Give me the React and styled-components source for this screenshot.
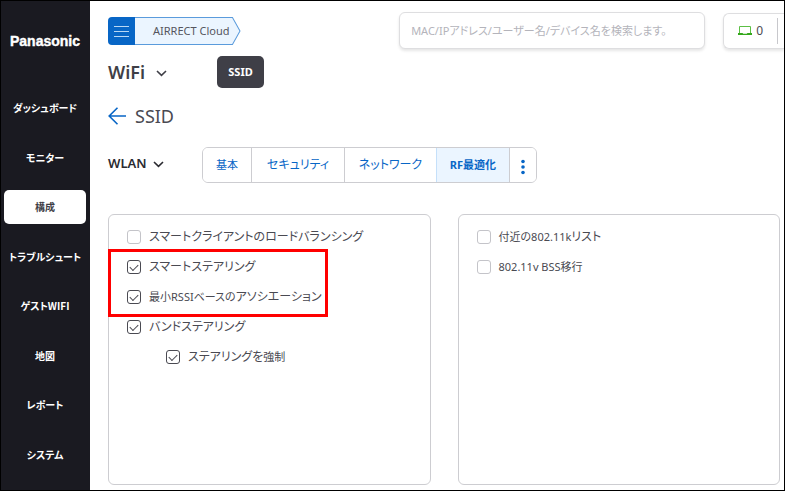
import { useState } from 'react';
import { createGlobalStyle, styled } from 'styled-components';

const GlobalStyle = createGlobalStyle`
  * {
    box-sizing: border-box;
  }

  body {
    margin: 0;
    background: #fff;
    color: #4a4a52;
    font-family: 'Noto Sans', 'Noto Sans CJK JP', sans-serif;
    font-size: 12px;
    line-height: 20px;
    font-feature-settings: 'palt';
  }

  button,
  input {
    font: inherit;
    font-feature-settings: inherit;
  }

  button {
    padding: 0;
    border: 0;
    background: none;
    color: inherit;
    cursor: pointer;
  }
`;

const Page = styled.div`
  display: flex;
  min-height: 100vh;
  border: 1px solid #000;
`;

const Sidebar = styled.aside`
  display: flex;
  flex: none;
  flex-direction: column;
  width: 89px;
  padding: 30px 4px 18px 3px;
  background: #1a1a21;
`;

const Brand = styled.a`
  margin-bottom: 40px;
  color: #fff;
  font-family: 'Liberation Sans', Arial, sans-serif;
  font-size: 14px;
  font-weight: 700;
  line-height: 20px;
  text-align: center;
  text-decoration: none;
  -webkit-text-stroke: 0.4px #fff;
`;

const Nav = styled.nav`
  display: flex;
  flex: 1;
  flex-direction: column;
  justify-content: space-between;
`;

const NavLink = styled.a`
  border-radius: 5px;
  background: ${({ $active }) => ($active ? '#fff' : 'transparent')};
  color: ${({ $active }) => ($active ? '#3f3f47' : '#fff')};
  font-family: 'Noto Sans CJK JP', sans-serif;
  font-size: 10px;
  font-weight: 700;
  line-height: 34px;
  text-align: center;
  text-decoration: none;
  white-space: nowrap;
`;

const Main = styled.main`
  display: flex;
  flex: 1;
  flex-direction: column;
  min-width: 0;
  padding: 11px 4px 5px 18px;
`;

const Header = styled.header`
  display: flex;
  align-items: center;
  margin-right: -4px;
`;

const Breadcrumb = styled.div`
  display: flex;
  flex: none;
  height: 28px;
`;

const MenuButton = styled.button`
  display: grid;
  place-items: center;
  width: 27px;
  border-radius: 4px 0 0 4px;
  background: #0866c6;
`;

const Crumb = styled.a`
  position: relative;
  padding: 0 11px 0 18px;
  color: #55555e;
  font-size: 11px;
  line-height: 28px;
  text-decoration: none;

  svg {
    position: absolute;
    inset: 0;
    width: 100%;
    height: 100%;
  }

  span {
    position: relative;
  }
`;

const Search = styled.input`
  flex: 0 1 306px;
  min-width: 0;
  height: 37px;
  margin-left: auto;
  padding: 0 11px;
  border: 1px solid #dedee0;
  border-radius: 6px;
  font-size: 11px;
  appearance: none;
  box-shadow: 0 2px 3px rgba(0, 0, 0, 0.1);

  &::placeholder {
    color: #b4b4bb;
  }
`;

const Status = styled.div`
  display: flex;
  flex: none;
  align-items: center;
  gap: 4px;
  height: 36px;
  margin-left: 18px;
  padding: 0 6px 0 14px;
  border: 1px solid #dedee0;
  border-right: 0;
  border-radius: 6px 0 0 6px;
  box-shadow: 0 2px 3px rgba(0, 0, 0, 0.1);

  &::after {
    width: 1px;
    height: 26px;
    margin-left: 10px;
    background: #c8c8cc;
    content: '';
  }
`;

const TitleRow = styled.div`
  display: flex;
  align-items: center;
  margin-top: 7px;
`;

const Picker = styled.button`
  display: flex;
  align-items: center;
  gap: ${({ $large }) => ($large ? '11px' : '6px')};
  width: ${({ $large }) => ($large ? '109px' : '94px')};
  color: ${({ $large }) => ($large ? '#3f3f47' : '#2a2a30')};
  font-size: ${({ $large }) => ($large ? '18px' : '13px')};
  font-weight: 600;
  line-height: 24px;

  svg {
    margin-top: 2px;
  }
`;

const DarkButton = styled.button`
  width: 47px;
  height: 32px;
  border-radius: 5px;
  background: #3f3f47;
  color: #fff;
  font-size: 11px;
  font-weight: 700;
`;

const Heading = styled.h1`
  display: flex;
  align-items: center;
  gap: 9px;
  margin: 16px 0 19px;
  font-size: 18px;
  font-weight: 400;
  line-height: 24px;

  button {
    display: flex;
  }
`;

const TabRow = styled.div`
  display: flex;
  align-items: flex-start;
  margin-bottom: 31px;

  > ${Picker} {
    margin-top: 4px;
  }
`;

const Tabs = styled.div`
  display: grid;
  grid-template-columns: 48px 93px 92px 73px 27px;
  overflow: hidden;
  border: 1px solid #cdcdd1;
  border-radius: 6px;
`;

const Tab = styled.button`
  height: 34px;
  background: ${({ $active }) => ($active ? '#ebf5ff' : '#fff')};
  color: #0866c6;
  font-weight: ${({ $active }) => ($active ? 700 : 400)};
  white-space: nowrap;

  &:not(:first-child) {
    border-left: 1px solid ${({ $active }) => ($active ? '#c5e0fa' : '#cdcdd1')};
  }

  svg {
    display: block;
    margin: 4px auto 0;
  }
`;

const Panels = styled.div`
  display: grid;
  flex: 1;
  grid-template-columns: 1fr 1fr;
  gap: 27px;
`;

const Panel = styled.section`
  display: flex;
  flex-direction: column;
  align-items: flex-start;
  gap: 10px;
  padding: 12px 18px;
  border: 1px solid #cdcdd1;
  border-radius: 6px;
`;

const Highlight = styled.div`
  position: relative;
  display: flex;
  flex-direction: column;
  gap: 10px;

  &::after {
    position: absolute;
    inset: -8px -6px -10px -19px;
    border: 3px solid #f00;
    content: '';
    pointer-events: none;
  }
`;

const OptionLabel = styled.label`
  display: flex;
  align-items: center;
  gap: 8px;
  margin-left: ${({ $nested }) => ($nested ? '39px' : '0')};
`;

const Checkbox = styled.input`
  display: grid;
  flex: none;
  place-items: center;
  width: 14px;
  height: 14px;
  margin: 0;
  border: 1px solid #c4c4c9;
  border-radius: 3px;
  appearance: none;

  &:checked {
    border-color: #4a4a52;
  }

  &:checked::after {
    width: 7px;
    height: 4px;
    margin-bottom: 2px;
    border: solid #4a4a52;
    border-width: 0 0 1px 1px;
    content: '';
    transform: rotate(-45deg);
  }
`;

const Small = styled.span`
  font-size: 11px;
`;

const NAV_ITEMS = [
  'ダッシュボード',
  'モニター',
  '構成',
  'トラブルシュート',
  'ゲストWIFI',
  '地図',
  'レポート',
  'システム',
];

const TABS = [
  { id: 'basic', label: <Small>基本</Small> },
  { id: 'security', label: 'セキュリティ' },
  { id: 'network', label: 'ネットワーク' },
  { id: 'rf', label: <Small>RF最適化</Small> },
];

function Chevron() {
  return (
    <svg width="11" height="7" viewBox="0 0 11 7" fill="none">
      <path d="M1 1l4.5 4.3L10 1" stroke="currentColor" strokeWidth="1.6" />
    </svg>
  );
}

function Option({ children, checked = false, nested }) {
  return (
    <OptionLabel $nested={nested}>
      <Checkbox type="checkbox" defaultChecked={checked} />
      <span>{children}</span>
    </OptionLabel>
  );
}

function App() {
  const [tab, setTab] = useState('rf');

  return (
    <>
      <GlobalStyle />
      <Page>
        <Sidebar>
          <Brand href="#">Panasonic</Brand>
          <Nav>
            {NAV_ITEMS.map((item) => (
              <NavLink key={item} href="#" $active={item === '構成'}>
                {item}
              </NavLink>
            ))}
          </Nav>
        </Sidebar>

        <Main>
          <Header>
            <Breadcrumb>
              <MenuButton aria-label="メニュー">
                <svg width="15" height="12" viewBox="0 0 15 12">
                  <path d="M0 1.5h15M0 6.5h15M0 11.5h15" stroke="#b9d8f5" />
                </svg>
              </MenuButton>
              <Crumb href="#">
                <svg viewBox="0 0 105 28" preserveAspectRatio="none">
                  <path
                    d="M0 .5h97l7.5 13.5-7.5 13.5H0"
                    fill="#ebf5ff"
                    stroke="#5a9bdc"
                  />
                </svg>
                <span>AIRRECT Cloud</span>
              </Crumb>
            </Breadcrumb>
            <Search
              type="text"
              aria-label="検索"
              placeholder="MAC/IPアドレス/ユーザー名/デバイス名を検索します。"
            />
            <Status>
              <svg width="14" height="10" viewBox="0 0 14 10" fill="none">
                <path d="M1.5 7.5v-7h11v7" stroke="#5cbf45" />
                <path d="M0 7h4.5l.8.7h3.4l.8-.7H14v2H0z" fill="#35a81c" />
              </svg>
              0
            </Status>
          </Header>

          <TitleRow>
            <Picker $large>
              WiFi
              <Chevron />
            </Picker>
            <DarkButton>SSID</DarkButton>
          </TitleRow>

          <Heading>
            <button aria-label="戻る">
              <svg width="18" height="18" viewBox="0 0 18 18" fill="none">
                <path
                  d="M9.5 .8L1.2 9l8.3 8.2M1.2 9H18"
                  stroke="#0866c6"
                  strokeWidth="1.6"
                />
              </svg>
            </button>
            SSID
          </Heading>

          <TabRow>
            <Picker>
              WLAN
              <Chevron />
            </Picker>
            <Tabs>
              {TABS.map(({ id, label }) => (
                <Tab key={id} $active={id === tab} onClick={() => setTab(id)}>
                  {label}
                </Tab>
              ))}
              <Tab aria-label="その他">
                <svg width="4" height="16" viewBox="0 0 4 16" fill="#0866c6">
                  <circle cx="2" cy="2.5" r="1.8" />
                  <circle cx="2" cy="8" r="1.8" />
                  <circle cx="2" cy="13.5" r="1.8" />
                </svg>
              </Tab>
            </Tabs>
          </TabRow>

          <Panels>
            <Panel>
              <Option>スマートクライアントのロードバランシング</Option>
              <Highlight>
                <Option checked>スマートステアリング</Option>
                <Option checked>
                  <Small>最小RSSIベースの</Small>アソシエーション
                </Option>
              </Highlight>
              <Option checked>バンドステアリング</Option>
              <Option checked nested>
                ステアリングを<Small>強制</Small>
              </Option>
            </Panel>
            <Panel>
              <Option>
                <Small>付近の802.11k</Small>リスト
              </Option>
              <Option>
                <Small>802.11v BSS移行</Small>
              </Option>
            </Panel>
          </Panels>
        </Main>
      </Page>
    </>
  );
}

export default App;
